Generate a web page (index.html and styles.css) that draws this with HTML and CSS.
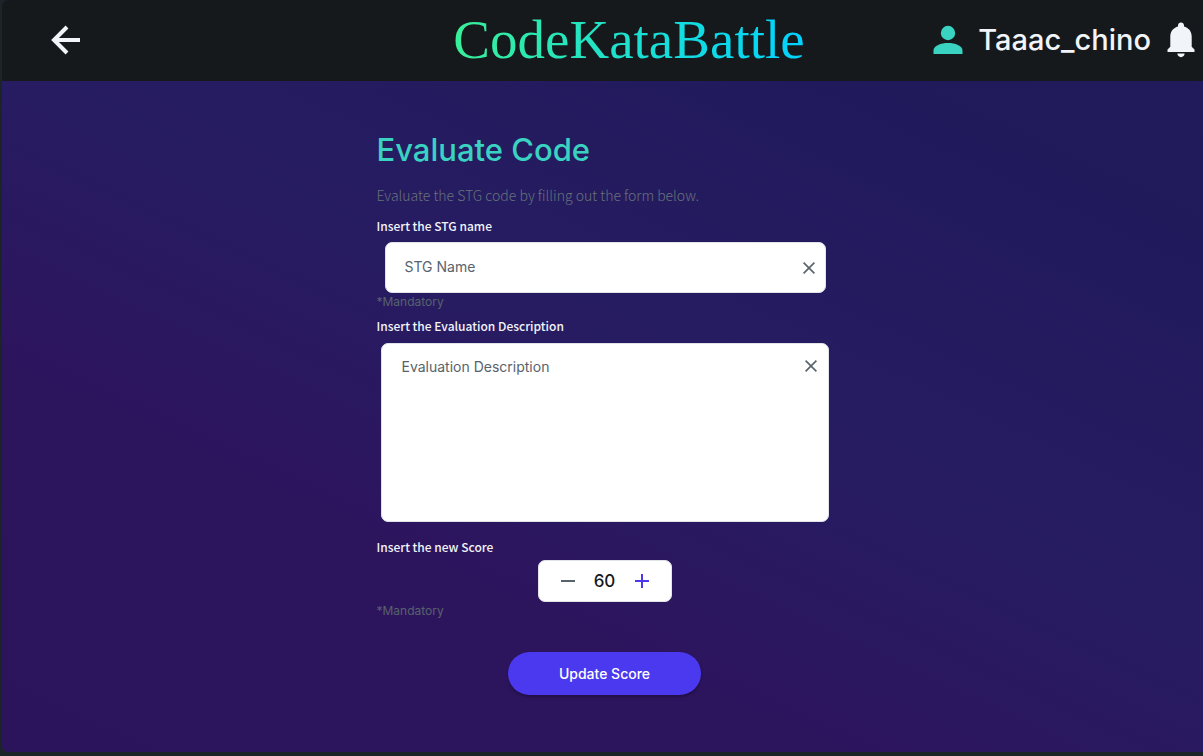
FILE: index.html
```html
<!DOCTYPE html>
<html lang="en">
<head>
<meta charset="utf-8">
<meta name="viewport" content="width=device-width, initial-scale=1">
<title>CodeKataBattle</title>
<link rel="stylesheet" href="styles.css">
</head>
<body>
<div class="screen">
  <header class="topbar">
    <button class="icon-button back" type="button" aria-label="Back">
      <svg width="30" height="30" viewBox="0 0 30 30" fill="none" stroke="currentColor" stroke-width="4"><path d="M29 15H4M16 2 3 15l13 13"/></svg>
    </button>
    <div class="logo">CodeKataBattle</div>
    <div class="account">
      <a class="user" href="#profile">
        <svg width="30" height="30" viewBox="0 0 30 30" fill="#3ad2c0"><circle cx="15" cy="8" r="7.2"/><path d="M.5 29v-3.500C.5 20.500 8 18 15 18s14.500 2.500 14.500 7.500V29z"/></svg>
        <span class="username">Taaac_chino</span>
      </a>
      <button class="icon-button" type="button" aria-label="Notifications">
        <svg width="28" height="36" viewBox="0 0 28 36" fill="currentColor"><path d="M14 .5c1.700 0 3 1.300 3 3v1c4.700 1.300 7.700 5 7.700 10v10.300l2.800 2.700V30H.5v-2.500l2.800-2.700V14.500c0-5 3-8.700 7.700-10v-1c0-1.700 1.300-3 3-3zM10.400 31.600h7.200c0 2-1.600 3.600-3.600 3.600s-3.600-1.600-3.600-3.600z"/></svg>
      </button>
    </div>
  </header>
  <main class="content">
    <form class="form">
      <h1 class="title">Evaluate Code</h1>
      <p class="intro">Evaluate the STG code by filling out the form below.</p>
      <label class="label" for="name">Insert the STG name</label>
      <div class="field field-name">
        <input class="control" id="name" type="text" placeholder="STG Name">
        <button class="clear" type="button" aria-label="Clear name"><svg width="12" height="12" viewBox="0 0 12 12" stroke="currentColor" stroke-width="1.600"><path d="m.6.6 10.800 10.800m0-10.800L.6 11.400"/></svg></button>
      </div>
      <p class="hint">*Mandatory</p>
      <label class="label" for="description">Insert the Evaluation Description</label>
      <div class="field field-description">
        <textarea class="control" id="description" placeholder="Evaluation Description"></textarea>
        <button class="clear" type="button" aria-label="Clear description"><svg width="12" height="12" viewBox="0 0 12 12" stroke="currentColor" stroke-width="1.600"><path d="m.6.6 10.800 10.800m0-10.800L.6 11.400"/></svg></button>
      </div>
      <label class="label" for="score">Insert the new Score</label>
      <div class="stepper">
        <button class="step minus" type="button" aria-label="Decrease"><svg width="14" height="14" viewBox="0 0 14 14" stroke="currentColor" stroke-width="2"><path d="M0 7h14"/></svg></button>
        <input class="score" id="score" type="text" inputmode="numeric" value="60">
        <button class="step plus" type="button" aria-label="Increase"><svg width="14" height="14" viewBox="0 0 14 14" stroke="currentColor" stroke-width="2"><path d="M0 7h14M7 0v14"/></svg></button>
      </div>
      <p class="hint">*Mandatory</p>
      <button class="submit" type="submit">Update Score</button>
    </form>
  </main>
</div>
</body>
</html>
```
FILE: styles.css
```css
* { box-sizing: border-box; }

body {
  margin: 0;
  background: #1d2428;
  font-family: Inter, "Liberation Sans", sans-serif;
}

button {
  padding: 0;
  border: 0;
  background: none;
  cursor: pointer;
}

svg { display: block; }

.screen {
  display: flex;
  flex-direction: column;
  min-height: calc(100vh - 4px);
  margin: 0 0 4px 2px;
  border-radius: 6px 0 0 6px;
  overflow: hidden;
  background: linear-gradient(25deg, #2c145c 0%, #2d155e 30%, #291961 43%, #271c62 52%, #241b5f 67%, #201a5c 80%, #201b59 100%);
}

.topbar {
  display: grid;
  grid-template-columns: 1fr auto 1fr;
  align-items: center;
  height: 81px;
  padding: 0 8px 2px 49px;
  background: #15191c;
  color: #f1f4f8;
}

.icon-button { color: inherit; }
.back { justify-self: start; }

.logo {
  margin-left: 12px;
  font: 55px/64px "Liberation Serif", serif;
  background: linear-gradient(90deg, #39ef98, #1de0d0 50%, #00d2ff);
  background-clip: text;
  -webkit-background-clip: text;
  color: transparent;
}

.account {
  display: flex;
  align-items: center;
  justify-content: flex-end;
  gap: 16px;
}

.user {
  display: flex;
  align-items: center;
  gap: 15px;
  color: inherit;
  text-decoration: none;
}

.username {
  font-size: 29px;
  line-height: 40px;
  font-weight: 500;
}

.content {
  display: flex;
  justify-content: center;
  padding: 49px 12px 48px 16px;
}

.form {
  display: flex;
  flex-direction: column;
  width: 100%;
  max-width: 456px;
}

.title {
  margin: 0 0 15px;
  color: #3ad2c0;
  font-size: 31px;
  line-height: 40px;
  font-weight: 500;
}

.intro,
.label { font-family: "Noto Sans CJK JP", "Noto Sans", sans-serif; }

.intro {
  margin: 0 0 13px;
  color: #67727a;
  font-size: 14px;
  line-height: 20px;
  font-weight: 300;
}

.label {
  color: #f1f4f8;
  font-size: 12px;
  line-height: 16px;
  font-weight: 500;
}

.field,
.stepper {
  display: flex;
  border: 1px solid #e0e3e7;
  border-radius: 7px;
  background: #fff;
}

.field { align-items: flex-start; }

.field-name {
  height: 51px;
  margin: 8px 7px 0 8px;
  padding: 18px 10px 0 19px;
}

.field-description {
  height: 179px;
  margin: 9px 4px 17px;
  padding: 15px 11px 8px 20px;
}

.control {
  flex: 1;
  min-width: 0;
  height: 100%;
  padding: 0;
  border: 0;
  outline: 0;
  resize: none;
  background: none;
  color: #14181b;
  font: 14px/16px Inter, sans-serif;
}

input.control { height: 16px; margin-top: -2px; }

.control::placeholder {
  color: #57636c;
  opacity: 1;
}

.clear {
  margin-top: 1px;
  color: #57636c;
}

.hint {
  margin: 0 0 8px;
  color: #57636c;
  font-size: 12px;
  line-height: 17px;
}

.stepper {
  align-items: center;
  justify-content: space-between;
  align-self: center;
  width: 134px;
  height: 42px;
  margin-top: 5px;
  padding: 0 22px;
}

.step { color: #57636c; }
.plus { color: #4b39ef; }

.score {
  width: 40px;
  padding: 0;
  border: 0;
  outline: 0;
  background: none;
  color: #14181b;
  font: 500 17px/24px Inter, sans-serif;
  text-align: center;
}

.submit {
  align-self: center;
  width: 193px;
  height: 43px;
  margin-top: 25px;
  border-radius: 22px;
  background: #4b39ef;
  box-shadow: 0 2px 3px rgba(0, 0, 0, 0.3);
  color: #fff;
  font: 500 14px/20px Inter, sans-serif;
}
```
